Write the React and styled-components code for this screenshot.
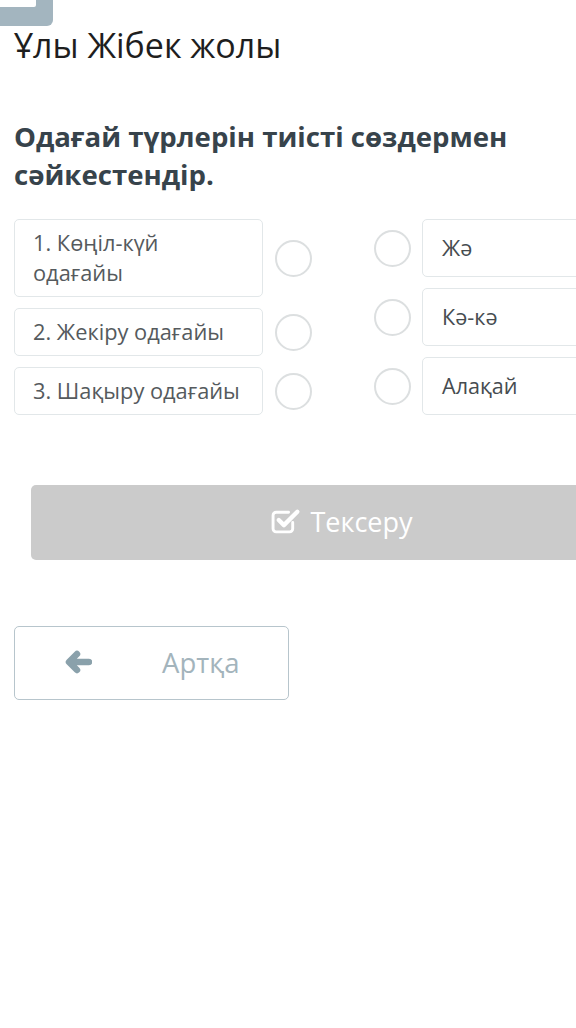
import React from "react";
import styled, { createGlobalStyle } from "styled-components";

const Global = createGlobalStyle`
  html, body { margin: 0; padding: 0; background: #fff; overflow-x: hidden; }
  body { font-family: "Open Sans", "DejaVu Sans", sans-serif; }
`;

const Page = styled.div`
  width: 576px;
  min-height: 1028px;
  overflow: hidden;
`;

const TopTab = styled.div`
  width: 53px;
  height: 26px;
  background: #a3b5bf;
  border-bottom-right-radius: 6px;
`;

const TabInner = styled.div`
  width: 36px;
  height: 7px;
  background: #fff;
  border-bottom-right-radius: 2px;
`;

const Content = styled.div`
  width: 657px;
  padding-left: 14px;
`;

const Title = styled.h1`
  margin: 0;
  font-weight: 400;
  font-size: 34px;
  line-height: 38px;
  color: #1e1e1e;
`;

const Question = styled.h2`
  margin: 53px 0 0;
  font-weight: 700;
  font-size: 27.6px;
  line-height: 38px;
  color: #37434b;
`;

const Match = styled.div`
  display: flex;
  margin-top: 26px;
`;

const Column = styled.div`
  display: flex;
  flex-direction: column;
  gap: 11px;
  width: ${(p) => p.$w}px;
`;

const Row = styled.div`
  display: flex;
  align-items: center;
  gap: ${(p) => p.$gap}px;
`;

const Card = styled.div`
  box-sizing: border-box;
  flex: none;
  width: 249px;
  border: 1px solid #e2e7e9;
  border-radius: 5px;
  padding: ${(p) => (p.$right ? "13px 19px" : "8px 18px")};
  font-size: ${(p) => (p.$right ? "21.6px" : "21.8px")};
  line-height: 30px;
  color: ${(p) => (p.$right ? "#464c50" : "#555a5d")};
`;

const Circle = styled.div`
  box-sizing: border-box;
  flex: none;
  width: 37px;
  height: 37px;
  border-radius: 50%;
  border: 2.5px solid #dcdfe0;
`;

const Spacer = styled.div`
  width: 63px;
  flex: none;
`;

const CheckButton = styled.button`
  box-sizing: border-box;
  display: flex;
  align-items: center;
  justify-content: center;
  gap: 8px;
  width: 622px;
  height: 75px;
  margin: 70px 0 0 17px;
  border: none;
  border-radius: 5px;
  background: #cbcbcb;
  color: #fff;
  font-family: "Open Sans", sans-serif;
  font-size: 27px;
  padding: 0 0 2px;
`;

const BackButton = styled.button`
  box-sizing: border-box;
  display: flex;
  align-items: center;
  width: 275px;
  height: 74px;
  margin-top: 66px;
  padding: 0 0 2px 49px;
  border: 1px solid #b7c5cc;
  border-radius: 5px;
  background: #fff;
  font-family: "Open Sans", sans-serif;
  font-size: 27.5px;
  color: #a3b4bc;
`;

const BackIconWrap = styled.span`
  display: flex;
  margin-right: 70px;
`;

const CheckIcon = () => (
  <svg width="31" height="29" viewBox="0 0 30 28" fill="none">
    <path
      d="M21 15 v6 a3 3 0 0 1 -3 3 H5 a3 3 0 0 1 -3 -3 V8 a3 3 0 0 1 3 -3 h12"
      stroke="#fff"
      strokeWidth="2.8"
      strokeLinecap="round"
    />
    <path
      d="M7.5 12.5 L12.5 17.5 L25.5 4.5"
      stroke="#fff"
      strokeWidth="4.2"
      strokeLinecap="round"
      strokeLinejoin="round"
    />
  </svg>
);

const ArrowIcon = () => (
  <svg width="28" height="24" viewBox="0 0 28 24" fill="none">
    <path
      d="M25 12 H6 M13 4 L5 12 L13 20"
      stroke="#8aa1ab"
      strokeWidth="6.5"
      strokeLinecap="round"
      strokeLinejoin="round"
    />
  </svg>
);

const left = ["1. Көңіл-күй одағайы", "2. Жекіру одағайы", "3. Шақыру одағайы"];
const right = ["Жә", "Кә-кә", "Алақай"];

export default function App() {
  return (
    <Page>
      <Global />
      <TopTab>
        <TabInner />
      </TopTab>
      <Content>
        <Title>Ұлы Жібек жолы</Title>
        <Question>Одағай түрлерін тиісті сөздермен сәйкестендір.</Question>
        <Match>
          <Column $w={297}>
            {left.map((t) => (
              <Row key={t} $gap={12}>
                <Card>{t}</Card>
                <Circle />
              </Row>
            ))}
          </Column>
          <Spacer />
          <Column $w={297}>
            {right.map((t) => (
              <Row key={t} $gap={11}>
                <Circle />
                <Card $right>{t}</Card>
              </Row>
            ))}
          </Column>
        </Match>
        <CheckButton>
          <CheckIcon />
          Тексеру
        </CheckButton>
        <BackButton>
          <BackIconWrap>
            <ArrowIcon />
          </BackIconWrap>
          Артқа
        </BackButton>
      </Content>
    </Page>
  );
}
